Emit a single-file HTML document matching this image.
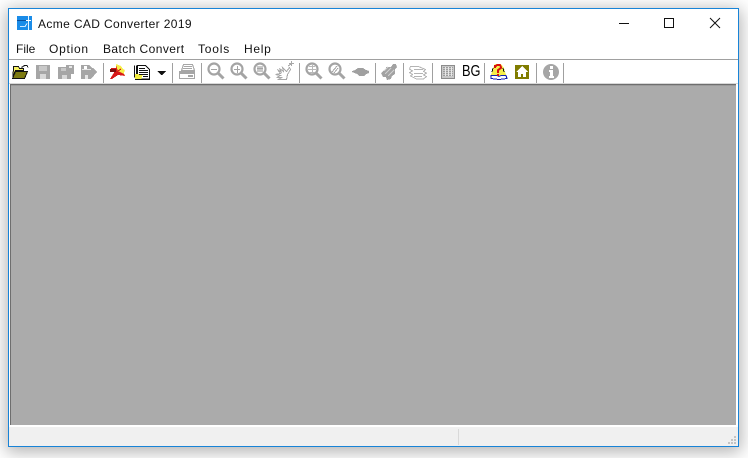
<!DOCTYPE html>
<html><head><meta charset="utf-8"><style>
html,body{margin:0;padding:0;width:748px;height:458px;overflow:hidden;background:#fff;}
body{position:relative;font-family:"Liberation Sans",sans-serif;}
.win{position:absolute;left:8px;top:8px;width:729px;height:437px;border:1px solid #1883d7;background:#fff;box-shadow:0 3px 16px 2px rgba(0,0,0,.3);}
.t{position:absolute;font-size:12px;color:#111;white-space:nowrap;line-height:16px;letter-spacing:.42px;}
svg{position:absolute;overflow:visible;}
</style></head><body>
<div class="win"></div>
<svg style="left:0;top:0" width="748" height="458" shape-rendering="crispEdges">
<!-- app icon -->
<rect x="17" y="16" width="15" height="14" fill="#1a8ce8"/>
<rect x="17" y="20" width="11" height="1" fill="#0a4f9a"/><rect x="28" y="16" width="1" height="14" fill="#e8f4ff"/>
<rect x="26" y="20" width="5" height="1" fill="#fff"/><path d="M20 26.500h5l2-3" stroke="#cfe8ff" fill="none"/>
<!-- window controls -->
<rect x="619" y="23" width="10" height="1" fill="#111"/>
<rect x="664.500" y="18.500" width="9" height="9" fill="none" stroke="#111"/>
<path d="M710 18l10 10M720 18l-10 10" stroke="#111" shape-rendering="auto" fill="none"/>
<!-- bars -->
<rect x="9" y="59" width="729" height="1" fill="#a0a0a0"/>
<rect x="10" y="84" width="726" height="341" fill="#ababab"/>
<rect x="10" y="84" width="726" height="1" fill="#6e6e6e"/><rect x="10" y="85" width="726" height="1" fill="#9a9a9a"/>
<rect x="10" y="84" width="1" height="341" fill="#6e6e6e"/>
<rect x="9" y="83" width="729" height="1" fill="#d8d8d8"/>
<rect x="9" y="427" width="729" height="19" fill="#f0f0f0"/>
<rect x="458" y="429" width="1" height="16" fill="#d9d9d9"/>
<g fill="#c4c4c4"><rect x="734" y="436" width="2" height="2"/><rect x="731" y="439" width="2" height="2"/><rect x="734" y="439" width="2" height="2"/><rect x="728" y="442" width="2" height="2"/><rect x="731" y="442" width="2" height="2"/><rect x="734" y="442" width="2" height="2"/></g>

<!-- open -->
<path d="M13.500 66.500h5l1 2h4v2h-8l-2.500 6z" fill="#f6f060" stroke="#111"/><path d="M12.500 78.500l3-7h12l-3 7z" fill="#7d7a10" stroke="#111"/>
<path d="M21.500 67.500l3-2h2.500l1 2" stroke="#111" fill="none"/>
<!-- save grey -->
<path d="M36 65h14v14H36z" fill="#a6a6a6"/><rect x="39" y="66" width="8" height="5" fill="#c8c8c8"/><rect x="40" y="74" width="6" height="5" fill="#d8d8d8"/>
<!-- save all -->
<path d="M58 67h8v-2h8v9h-3v5H58z" fill="#a6a6a6"/><rect x="61" y="68" width="5" height="3" fill="#c8c8c8"/><rect x="69" y="66" width="3" height="2" fill="#e6e6e6"/><rect x="62" y="75" width="5" height="4" fill="#d8d8d8"/>
<!-- export -->
<path d="M81 65h8l3 3h1l4 4-6 7H81z" fill="#a6a6a6"/><rect x="84" y="66" width="3" height="3" fill="#fff"/><rect x="82" y="69" width="9" height="1" fill="#e6e6e6"/><rect x="85" y="75" width="3" height="4" fill="#e6e6e6"/>
<rect x="103" y="63" width="1" height="20" fill="#a0a0a0"/>
<!-- acad -->
<path d="M116 64l5 2 2 3 2 1-1 3 1 3-5-1-4-3z" fill="#f6ee4a"/>
<path d="M116 65l2 6 6 3 1 2-7-1-6 4-2 0 5-8h-4v-3h5z" fill="#d81818"/><rect x="110" y="69" width="6" height="3" fill="#7a1010"/><path d="M118 71l3-2" stroke="#d81818" fill="none"/>
<!-- batch -->
<rect x="134" y="66" width="4" height="12" fill="#fff"/>
<path d="M134.500 65.500v12M136.500 65.500v12" stroke="#111" fill="none"/>
<path d="M137.500 65.500h8l4 4v9.500h-12z" fill="#fff" stroke="#111"/>
<path d="M135 74h8l-2 6h-6z" fill="#f2ec40"/>
<path d="M135 79.500h15" stroke="#111"/>
<path d="M139 68.500h6M139 70.500h9M139 72.500h9M139 74.500h9M143 76.500h5" stroke="#111"/>
<path d="M157 71h9l-4 4h-1z" fill="#111"/>
<rect x="172" y="63" width="1" height="20" fill="#a0a0a0"/>
<!-- printer -->
<g fill="none" stroke="#a6a6a6"><path d="M183.500 64.500h9l2 6h-13z"/><rect x="179.500" y="71.500" width="15" height="7"/></g><path d="M184 66.500h8M183 68.500h9" stroke="#a6a6a6"/><rect x="180" y="72" width="14" height="2" fill="#a6a6a6"/><rect x="188" y="75" width="5" height="2" fill="#a6a6a6"/>
<rect x="201" y="63" width="1" height="20" fill="#a0a0a0"/>
<!-- zooms -->
<g fill="none" stroke="#a4a4a4" stroke-width="2.200" shape-rendering="auto">
<circle cx="214" cy="69" r="5.500"/><path d="M218 73l5.500 5.500" stroke-width="3"/>
<circle cx="237" cy="69" r="5.500"/><path d="M241 73l5.500 5.500" stroke-width="3"/>
<circle cx="260" cy="69" r="5.500"/><path d="M264 73l5.500 5.500" stroke-width="3"/>
<circle cx="312" cy="69" r="5.500"/><path d="M316 73l5.500 5.500" stroke-width="3"/>
<circle cx="335" cy="69" r="5.500"/><path d="M339 73l5.500 5.500" stroke-width="3"/>
</g>
<path d="M211 69.500h6" stroke="#a4a4a4"/><path d="M234 69.500h6M237.500 66v7" stroke="#a4a4a4"/><rect x="257" y="66" width="6" height="6" fill="#c8c8c8"/><rect x="257" y="68" width="6" height="1" fill="#a4a4a4"/>
<path d="M308 69.500h8M312.500 65v9M309 66.500h6M309 72.500h6" stroke="#b8b8b8"/><path d="M332 72l5-6M334 73l4-5" stroke="#a4a4a4"/>
<!-- hand -->
<path d="M277.500 69.500l4 3-2-4 4 3-1-4 4 4 3-4 1 2-3 5-1 5h-8l3-2h-5l4-2-5-1 5-1z" fill="none" stroke="#a8a8a8"/><path d="M288 66l3-2M291.500 61v5M289 63.500h5" stroke="#a8a8a8"/>
<rect x="299" y="63" width="1" height="20" fill="#a0a0a0"/>
<!-- eye -->
<path d="M352 71l3-1 3-2h5l3 2 3 1v2l-3 1-2 2h-5l-2-2-5-2z" fill="#a0a0a0"/>
<rect x="375" y="63" width="1" height="20" fill="#a0a0a0"/>
<!-- measure blob -->
<path d="M381 73l3-3h2v-3h5l2-3h3l1 3-2 2v5l-3 2-1 3-4 1-1-3h-3z" fill="#a2a2a2"/><path d="M385 74l6-6M388 76l6-6M384 71l4-4" stroke="#cfcfcf"/>
<rect x="403" y="63" width="1" height="20" fill="#a0a0a0"/>
<!-- layers -->
<path d="M410.500 66.500h8l7 3-2 2 3 1.500-3 2 3 1.500-3 2.500h-7l-6-3 2-1.500-3-2 3-1.500-3-2z M414 69.500h9M414 73.500h9M414 76.500h8" fill="none" stroke="#b4b4b4"/>
<rect x="432" y="63" width="1" height="20" fill="#a0a0a0"/>
<!-- grid -->
<rect x="441" y="65" width="13" height="14" fill="#c8c8c8"/><rect x="441.500" y="65.500" width="13" height="13" fill="none" stroke="#8c8c8c"/><path d="M443 67.500h10M443 69.500h10M443 71.500h10M443 73.500h10M443 75.500h10" stroke="#9c9c9c"/><path d="M445.500 67v9M448.500 67v9M451.500 67v9" stroke="#e8e8e8"/>
<rect x="484" y="63" width="1" height="20" fill="#a0a0a0"/>
<!-- help -->
<path d="M495 64h6l3 4 1 4 2 5h-17l2-5 1-4z" fill="#f6ee4a"/>
<path d="M491 75.500h6l2 1 2-1h5l1 3-8 1-8-1z" fill="#fff" stroke="#1020b0"/>
<path d="M495 68v-2h1l1-1h3l1 2v1l-3 2v3" fill="none" stroke="#d81010" stroke-width="2"/><rect x="497" y="74" width="2" height="2" fill="#d81010"/>
<path d="M492 72l1-4" stroke="#111"/><path d="M504 72l-1-4" stroke="#111"/>
<!-- home -->
<rect x="515" y="65" width="14" height="14" fill="#807c00"/><path d="M522 66l6 6h-2v5h-8v-5h-2z" fill="#fff"/><rect x="521" y="74" width="2" height="3" fill="#807c00"/>
<rect x="536" y="63" width="1" height="20" fill="#a0a0a0"/>
<!-- info -->
<circle cx="551" cy="72" r="8" fill="#a6a6a6" shape-rendering="auto"/><rect x="550" y="66" width="3" height="3" fill="#fff"/><path d="M549 70h4v6h1v2h-5v-2h1v-4h-1z" fill="#fff"/>
<rect x="563" y="63" width="1" height="20" fill="#a0a0a0"/>
</svg>
<div class="t" style="left:38px;top:16px;letter-spacing:.37px">Acme CAD Converter 2019</div>
<div class="t" style="left:16px;top:41px;letter-spacing:0">File</div>
<div class="t" style="left:49px;top:41px;letter-spacing:.75px">Option</div>
<div class="t" style="left:103px;top:41px">Batch Convert</div>
<div class="t" style="left:198px;top:41px;letter-spacing:.8px">Tools</div>
<div class="t" style="left:244px;top:41px;letter-spacing:.7px">Help</div>
<div class="t" style="left:462px;top:63px;font-size:16px;letter-spacing:0;line-height:18px;color:#000;transform:scaleX(.8);transform-origin:left">BG</div>
</body></html>
